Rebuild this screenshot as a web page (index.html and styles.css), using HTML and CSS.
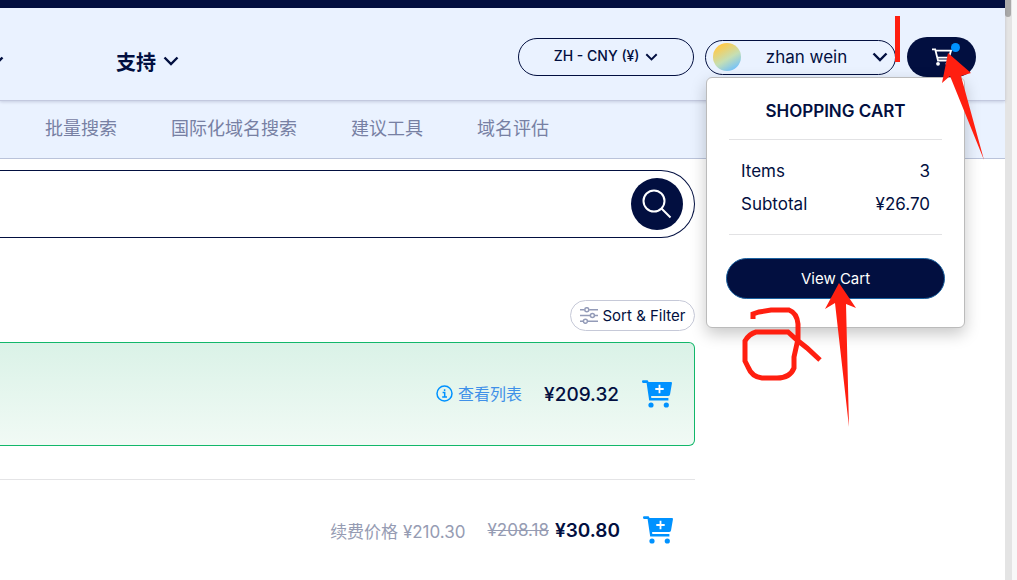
FILE: index.html
```html
<!DOCTYPE html>
<html lang="zh">

<head>
    <meta charset="utf-8">
    <meta name="viewport" content="width=device-width, initial-scale=1.0">
    <title>域名搜索</title>
    <link rel="stylesheet" href="styles.css">
</head>

<body>
    <svg class="symbols" aria-hidden="true">
        <symbol id="chevron" viewBox="0 0 16 10">
            <path d="M1.5 1.5 L8 8 L14.5 1.5" fill="none" stroke="currentColor" stroke-width="2.4" />
        </symbol>
        <symbol id="cart-add" viewBox="0 0 30 28">
            <path d="M1 .3 H5.6 L6.6 2 H29 Q30 2 30 3 L28 14.4 Q27.6 16 26 16 H9.1 L9.3 18 H26.4 V20.4 H7.2 L4.6 3 H1 Q0 3 0 1.6 Q0 .3 1 .3 Z" fill="currentColor" />
            <path d="M17.5 4.8 V13.2 M13.3 9 H21.7" stroke="#fff" stroke-width="1.8" />
            <circle cx="9" cy="25" r="2.6" fill="currentColor" />
            <circle cx="24.3" cy="25" r="2.6" fill="currentColor" />
        </symbol>
    </svg>

    <div class="page">
        <div class="topbar"></div>
        <header>
            <nav class="hovednav">
                <a href="#" aria-label="域名"><svg class="pil"><use href="#chevron" /></svg></a>
                <a href="#">支持 <svg class="pil"><use href="#chevron" /></svg></a>
            </nav>
            <div class="konto">
                <button class="valuta">ZH - CNY (¥) <svg class="pil lille"><use href="#chevron" /></svg></button>
                <button class="bruger">
                    <span class="avatar"></span>
                    <span>zhan wein</span>
                    <svg class="pil"><use href="#chevron" /></svg>
                </button>
                <div class="kurv">
                    <button class="kurvknap" aria-label="Cart">
                        <svg width="20" height="18" viewBox="0 0 20 18">
                            <path d="M0 1.3 H3.2 L6 12.5 H17 M3.4 2.6 H19 L17 9.6 H5.4" fill="none" stroke="#fff" stroke-width="1.8" />
                            <circle cx="6" cy="15.8" r="1.9" fill="#fff" />
                            <circle cx="15.5" cy="15.8" r="1.9" fill="#fff" />
                        </svg>
                        <span class="prik"></span>
                    </button>
                    <section class="popup">
                        <h2>SHOPPING CART</h2>
                        <dl>
                            <div><dt>Items</dt><dd>3</dd></div>
                            <div><dt>Subtotal</dt><dd>¥26.70</dd></div>
                        </dl>
                        <button class="viskurv">View Cart</button>
                    </section>
                </div>
            </div>
        </header>

        <nav class="undernav">
            <a href="#">批量搜索</a>
            <a href="#">国际化域名搜索</a>
            <a href="#">建议工具</a>
            <a href="#">域名评估</a>
        </nav>

        <main>
            <form class="soeg">
                <input type="text" aria-label="搜索域名">
                <button type="button" aria-label="搜索">
                    <svg width="30" height="30" viewBox="0 0 30 30" fill="none" stroke="#fff" stroke-width="2">
                        <circle cx="12" cy="12" r="10.5" />
                        <path d="M19.5 19.5 L28.5 28.5" />
                    </svg>
                </button>
            </form>

            <button class="filter">
                <svg width="18" height="17" viewBox="0 0 18 17" fill="none" stroke="#939bb8" stroke-width="1.5">
                    <path d="M0 2.7 H4.4 M9.2 2.7 H18 M0 8.5 H10 M14.8 8.5 H18 M0 14.3 H3 M7.8 14.3 H18" />
                    <circle cx="6.8" cy="2.7" r="2" />
                    <circle cx="12.4" cy="8.5" r="2" />
                    <circle cx="5.4" cy="14.3" r="2" />
                </svg>
                Sort &amp; Filter
            </button>

            <div class="resultat valgt">
                <a class="info" href="#">
                    <svg width="17" height="17" viewBox="0 0 17 17" fill="none" stroke="currentColor" stroke-width="1.5">
                        <circle cx="8.5" cy="8.5" r="7.5" />
                        <path d="M6.6 7.4 H8.7 V12 M6.2 12 H11 M8.6 4.2 V5.9" />
                    </svg>
                    查看列表
                </a>
                <span class="pris">¥209.32</span>
                <button class="tilfoej" aria-label="加入购物车"><svg width="30" height="28"><use href="#cart-add" /></svg></button>
            </div>

            <div class="resultat">
                <span class="fornyelse">续费价格 ¥210.30</span>
                <del>¥208.18</del>
                <span class="pris tilbud">¥30.80</span>
                <button class="tilfoej" aria-label="加入购物车"><svg width="30" height="28"><use href="#cart-add" /></svg></button>
            </div>
        </main>

        <!-- hand-drawn notes: step 1 and step 2 -->
        <svg class="noter" width="260" height="430" viewBox="740 0 260 430" aria-hidden="true">
            <path class="streg" d="M897.500 16 V62" />
            <path class="streg" d="M753 319 V314 L759 312 L771 310 H789 Q797 313 798 324 V339 L794 357 V368 Q790 378 777 378 H762 Q752 377 748 367 L745 361 V341 Q749 334 756 332 H788 L797 340 L807 348 L820 360" />
            <path d="M948 53 L971 73 L961 76 L984 160 L950 76 L942 83 Z" />
            <path d="M839 283 L856 308 L846 304 L849 427 L835 303 L825 309 Z" />
        </svg>
    </div>

    <div class="rulle"><div class="greb"></div></div>
</body>

</html>
```

FILE: styles.css
```css
* {
    box-sizing: border-box;
}

body {
    display: flex;
    min-height: 100vh;
    margin: 0;
    background: white;
    color: #020f40;
    font-family: Inter, "Noto Sans CJK SC", sans-serif;
}

button {
    padding: 0;
    border: 0;
    background: none;
    color: inherit;
    font-family: inherit;
}

a {
    color: inherit;
    text-decoration: none;
}

.symbols {
    position: absolute;
    width: 0;
    height: 0;
}

.page {
    position: relative;
    flex: 1;
    min-width: 0;
}

.topbar {
    height: 8px;
    background: #020f40;
}

header {
    position: relative;
    z-index: 1;
    display: flex;
    justify-content: space-between;
    align-items: center;
    height: 93px;
    padding: 6px 29px 0 0;
    background: #eaf2ff;
    border-bottom: 1px solid #c3c9df;
    box-shadow: 0 1px 3px rgba(2, 15, 64, 0.16);
}

.hovednav {
    display: flex;
    gap: 112px;
    padding-top: 8px;
    margin-left: -12px;
    font-size: 20px;
    font-weight: 600;
}

.hovednav a {
    display: flex;
    align-items: center;
    gap: 7px;
}

.pil {
    width: 16px;
    height: 10px;
}

.lille {
    width: 13px;
    height: 8px;
    margin-left: 2px;
}

.konto {
    display: flex;
    align-items: center;
    gap: 11px;
}

.valuta {
    width: 176px;
    height: 38px;
    padding-bottom: 3px;
    border: 1px solid #020f40;
    border-radius: 19px;
    font-size: 14px;
    font-weight: 500;
}

.bruger {
    display: flex;
    justify-content: space-between;
    align-items: center;
    width: 191px;
    height: 35px;
    padding: 0 7px;
    border: 1px solid #020f40;
    border-radius: 18px;
    font-size: 17px;
}

.avatar {
    width: 28px;
    height: 28px;
    border-radius: 50%;
    background: linear-gradient(150deg, #ffca4b 15%, #c5dfb4 55%, #6fc0ff 90%);
}

.kurv {
    position: relative;
}

.kurvknap {
    display: grid;
    place-items: center;
    position: relative;
    width: 69px;
    height: 40px;
    border-radius: 20px;
    background: #020f40;
}

.prik {
    position: absolute;
    top: 6px;
    right: 16px;
    width: 9px;
    height: 9px;
    border-radius: 50%;
    background: #0092ff;
}

.popup {
    position: absolute;
    top: 40px;
    right: 11px;
    width: 259px;
    padding: 21px 19px 28px;
    border: 1px solid #bbb;
    border-radius: 6px;
    background: white;
    box-shadow: 0 6px 16px rgba(0, 0, 0, 0.22);
}

.popup h2 {
    margin: 0 3px;
    padding-bottom: 16px;
    border-bottom: 1px solid #e2e2e4;
    font-size: 17px;
    font-weight: 600;
    line-height: 24px;
    text-align: center;
}

.popup dl {
    margin: 0 3px 23px;
    padding: 15px 12px 13px;
    border-bottom: 1px solid #e2e2e4;
    font-size: 17px;
    line-height: 33px;
}

.popup dl div {
    display: flex;
    justify-content: space-between;
}

.popup dd {
    margin: 0;
}

.viskurv {
    width: 100%;
    height: 41px;
    border: 1px solid #1b62a0;
    border-radius: 21px;
    background: #020f40;
    color: white;
    font-size: 15px;
}

.undernav {
    display: flex;
    gap: 54px;
    height: 58px;
    padding-left: 45px;
    background: #eaf2ff;
    border-bottom: 1px solid #bac3da;
    color: #7780a3;
    font-size: 18px;
    line-height: 56px;
}

main {
    margin-right: 310px;
    padding-top: 11px;
}

.soeg {
    display: flex;
    align-items: center;
    height: 68px;
    padding-right: 11px;
    border: 1px solid #020f40;
    border-left: 0;
    border-radius: 0 34px 34px 0;
}

.soeg input {
    flex: 1;
    height: 50px;
    border: 0;
    outline: 0;
    background: none;
    font-size: 18px;
}

.soeg button {
    display: grid;
    place-items: center;
    width: 52px;
    height: 52px;
    border-radius: 50%;
    background: #020f40;
}

.filter {
    display: flex;
    align-items: center;
    justify-content: center;
    gap: 5px;
    width: 125px;
    height: 31px;
    margin: 62px 0 11px auto;
    border: 1px solid #c6c9d8;
    border-radius: 16px;
    font-size: 15px;
}

.resultat {
    display: flex;
    align-items: center;
    justify-content: flex-end;
    height: 101px;
    padding-right: 22px;
    border-top: 1px solid #e4e4e6;
}

.resultat.valgt {
    height: 104px;
    margin-bottom: 33px;
    border: 1px solid #12b76a;
    border-left: 0;
    border-radius: 0 6px 6px 0;
    background: linear-gradient(#daf2e7, #f1faf5);
}

.info {
    display: flex;
    align-items: center;
    gap: 5px;
    margin-right: 22px;
    padding-bottom: 2px;
    color: #3f90e8;
    font-size: 16px;
}

.info svg {
    color: #0092ff;
}

.pris {
    font-size: 19px;
    font-weight: 500;
}

.tilbud {
    font-weight: 600;
}

.fornyelse,
del {
    color: #969cb3;
    font-size: 17px;
}

.fornyelse {
    margin-right: 22px;
}

del {
    margin-right: 6px;
}

.tilfoej {
    height: 28px;
    margin-left: 23px;
    color: #0092ff;
}

.noter {
    position: absolute;
    top: 0;
    right: 5px;
    z-index: 2;
    fill: #ff1f10;
    pointer-events: none;
}

.streg {
    fill: none;
    stroke: #ff1f10;
    stroke-width: 5;
}

.rulle {
    width: 12px;
    background: #e4e4e4;
    border-right: 5px solid #f8f8f8;
}

.greb {
    width: 6px;
    height: 17px;
    border-radius: 0 0 3px 3px;
    background: #a9a9a9;
}
```
